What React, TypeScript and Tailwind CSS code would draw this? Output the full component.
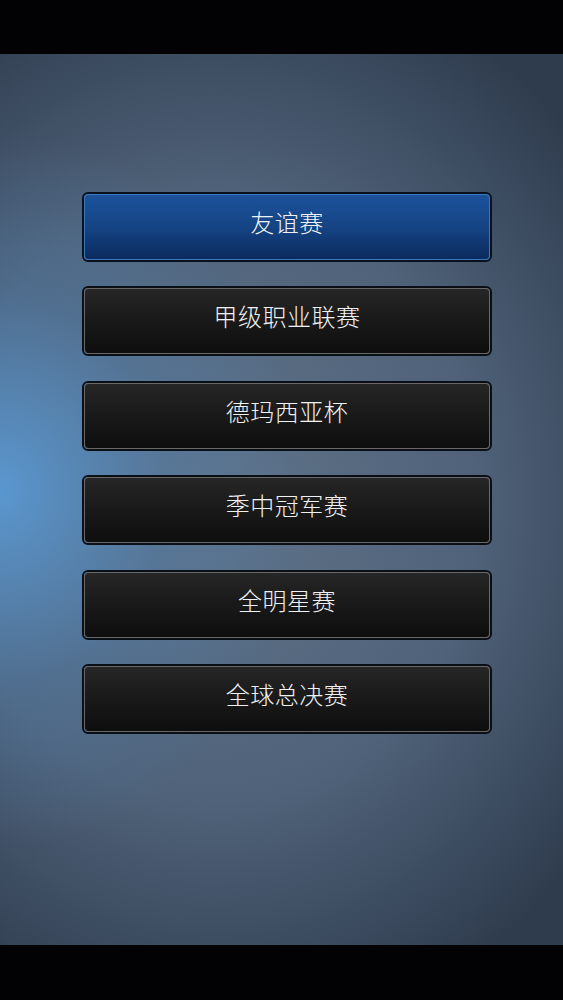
const items = ['友谊赛', '甲级职业联赛', '德玛西亚杯', '季中冠军赛', '全明星赛', '全球总决赛'];

function MenuButton({ label, active }: { label: string; active?: boolean }) {
    return (
        <button
            className={
                'h-[70px] w-full rounded-[6px] border-2 p-0 ' +
                (active ? 'border-[#08111d]' : 'border-[#0a0f16]')
            }
        >
            <div
                className={
                    'flex h-full w-full items-center justify-center rounded-[4px] border pb-[10px] ' +
                    (active
                        ? 'border-[#3a78bd] bg-gradient-to-b from-[#1c529c] via-[#154484] to-[#0b2b5e]'
                        : 'border-[#686868] bg-gradient-to-b from-[#262626] via-[#191919] to-[#0e0e0e]')
                }
            >
                <span className="text-[24px] font-light leading-none tracking-[0.5px] text-[#f0f1f3] [font-family:'Noto_Sans_CJK_SC',sans-serif]">
                    {label}
                </span>
            </div>
        </button>
    );
}

export default function App() {
    return (
        <div className="flex h-[1000px] w-[563px] flex-col bg-black">
            <div className="h-[54px] bg-[#020204]" />
            <div className="relative h-[891px] overflow-hidden bg-[#3b5068] bg-[radial-gradient(ellipse_55%_40%_at_0%_49%,#5a97cf_0%,rgba(80,130,180,0.35)_55%,transparent_100%),radial-gradient(ellipse_85%_62%_at_38%_50%,#5f7389_0%,#4f6279_55%,#2f3c4e_100%)]">
                <div className="flex flex-col gap-[24.4px] pl-[82px] pr-[71px] pt-[138px]">
                    {items.map((label, i) => (
                        <MenuButton key={label} label={label} active={i === 0} />
                    ))}
                </div>
            </div>
            <div className="h-[55px] bg-[#020204]" />
        </div>
    );
}
